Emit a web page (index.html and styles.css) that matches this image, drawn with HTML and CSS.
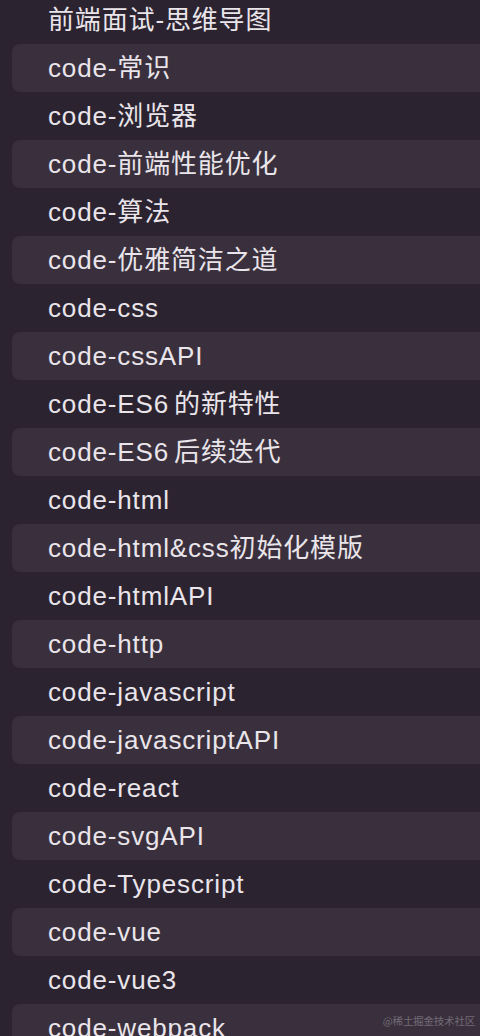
FILE: index.html
```html
<!DOCTYPE html>
<html lang="zh-CN">
<head>
<meta charset="utf-8">
<link rel="stylesheet" href="styles.css">
</head>
<body>
<ul class="list">
  <li class="row">前端面试-思维导图</li>
  <li class="row alt">code-常识</li>
  <li class="row">code-浏览器</li>
  <li class="row alt">code-前端性能优化</li>
  <li class="row">code-算法</li>
  <li class="row alt">code-优雅简洁之道</li>
  <li class="row">code-css</li>
  <li class="row alt">code-cssAPI</li>
  <li class="row">code-ES6 的新特性</li>
  <li class="row alt">code-ES6 后续迭代</li>
  <li class="row">code-html</li>
  <li class="row alt">code-html&amp;css初始化模版</li>
  <li class="row">code-htmlAPI</li>
  <li class="row alt">code-http</li>
  <li class="row">code-javascript</li>
  <li class="row alt">code-javascriptAPI</li>
  <li class="row">code-react</li>
  <li class="row alt">code-svgAPI</li>
  <li class="row">code-Typescript</li>
  <li class="row alt">code-vue</li>
  <li class="row">code-vue3</li>
  <li class="row alt">code-webpack</li>
</ul>
<div class="watermark">@稀土掘金技术社区</div>
</body>
</html>
```

FILE: styles.css
```css
html, body {
  margin: 0;
  padding: 0;
  width: 480px;
  height: 1036px;
  overflow: hidden;
  background: #2c2330;
}
body {
  position: relative;
  font-family: "Liberation Sans", "Noto Sans CJK SC", sans-serif;
}
.list {
  list-style: none;
  margin: -4px 0 0 0;
  padding: 0;
}
.row {
  height: 48px;
  line-height: 48px;
  margin-left: 12px;
  margin-right: -20px;
  padding-left: 36px;
  border-radius: 8px;
  color: #e9e5ea;
  font-size: 26px;
  letter-spacing: 0.85px;
  word-spacing: -3px;
  white-space: nowrap;
}
.row.alt {
  background: #3a303d;
}
.watermark {
  position: absolute;
  right: 5px;
  bottom: 8px;
  font-family: "Noto Sans CJK SC", sans-serif;
  font-size: 10.5px;
  color: #726a76;
  letter-spacing: -0.2px;
}
```
